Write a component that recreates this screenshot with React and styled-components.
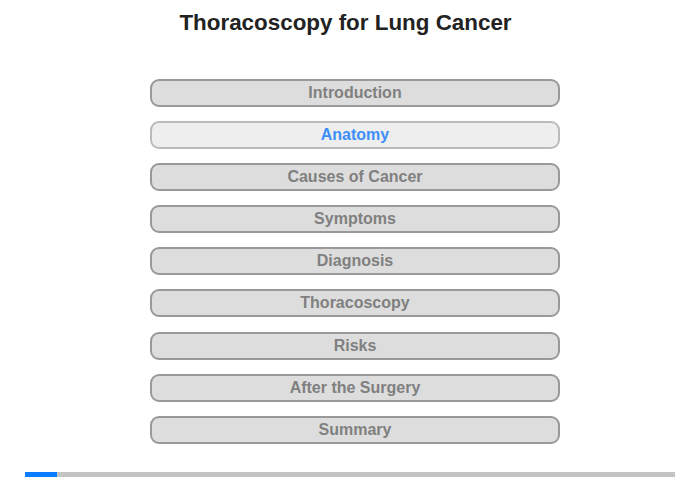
import React from "react";
import styled, { createGlobalStyle } from "styled-components";

const Global = createGlobalStyle`
  html, body { margin: 0; padding: 0; background: #ffffff; }
  body { font-family: "Liberation Sans", Arial, sans-serif; }
`;

const Page = styled.div`
  width: 700px;
  height: 480px;
  display: flex;
  flex-direction: column;
  box-sizing: border-box;
  padding-top: 10px;
`;

const Title = styled.h1`
  margin: 0;
  font-size: 22.4px;
  line-height: 26px;
  font-weight: bold;
  color: #222222;
  text-align: center;
  padding-right: 9px;
`;

const Menu = styled.nav`
  display: flex;
  flex-direction: column;
  gap: 14.1px;
  margin-top: 43px;
  margin-left: 150px;
  width: 410px;
`;

const Item = styled.div`
  box-sizing: border-box;
  height: 28px;
  border: 2px solid ${(p) => (p.$active ? "#bbbbbb" : "#999999")};
  border-radius: 9px;
  background: ${(p) => (p.$active ? "#eeeeee" : "#dddddd")};
  color: ${(p) => (p.$active ? "#3d8ef8" : "#808080")};
  font-size: 16px;
  font-weight: bold;
  display: flex;
  align-items: center;
  justify-content: center;
  line-height: 1;
`;

const Progress = styled.div`
  margin: 28px 0 0 25px;
  width: 650px;
  height: 5px;
  background: #c4c4c4;
  display: flex;
`;

const Fill = styled.div`
  height: 100%;
  background: #0a7cff;
`;

const items = [
  "Introduction",
  "Anatomy",
  "Causes of Cancer",
  "Symptoms",
  "Diagnosis",
  "Thoracoscopy",
  "Risks",
  "After the Surgery",
  "Summary",
];

export default function App() {
  return (
    <>
      <Global />
      <Page>
        <Title>Thoracoscopy for Lung Cancer</Title>
        <Menu>
          {items.map((t) => (
            <Item key={t} $active={t === "Anatomy"}>
              {t}
            </Item>
          ))}
        </Menu>
        <Progress>
          <Fill style={{ width: "32px" }} />
        </Progress>
      </Page>
    </>
  );
}
